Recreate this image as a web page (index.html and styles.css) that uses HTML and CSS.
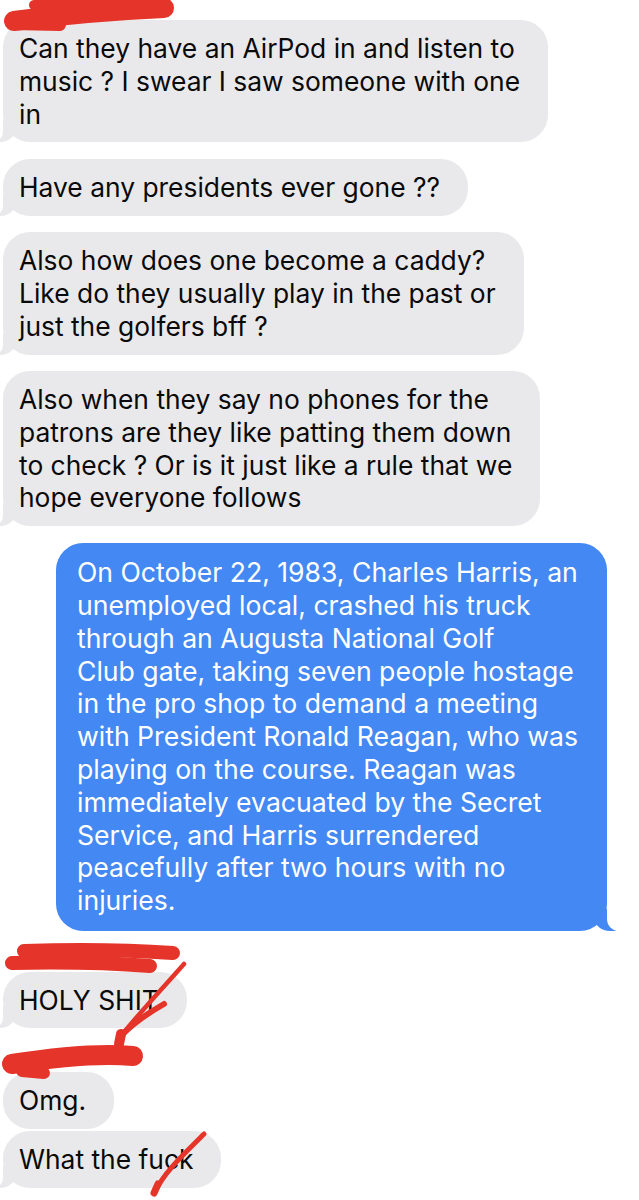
FILE: index.html
```html
<!DOCTYPE html>
<html>
<head>
<title>Messages</title>
<meta http-equiv="Content-Type" content="text/html; charset=UTF-8"/>
<link rel="stylesheet" href="styles.css">
</head>
<body>
<div class="thread">

  <div class="group first">
    <div class="bubble in tail">Can they have an AirPod in and listen to<br>music ? I swear I saw someone with one<br>in</div>
    <div class="bubble in tail">Have any presidents ever gone ??</div>
    <div class="bubble in tail">Also how does one become a caddy?<br>Like do they usually play in the past or<br>just the golfers bff ?</div>
    <div class="bubble in tail">Also when they say no phones for the<br>patrons are they like patting them down<br>to check ? Or is it just like a rule that we<br>hope everyone follows</div>
  </div>

  <div class="group mine">
    <div class="bubble out tail">On October 22, 1983, Charles Harris, an<br>unemployed local, crashed his truck<br>through an Augusta National Golf<br>Club gate, taking seven people hostage<br>in the pro shop to demand a meeting<br>with President Ronald Reagan, who was<br>playing on the course. Reagan was<br>immediately evacuated by the Secret<br>Service, and Harris surrendered<br>peacefully after two hours with no<br>injuries.</div>
  </div>

  <div class="group named">
    <div class="bubble in tail">HOLY SHIT</div>
  </div>

  <div class="group named tight">
    <div class="bubble in">Omg.</div>
    <div class="bubble in tail">What the fuck</div>
  </div>

  <!-- marker scribbles drawn over the screenshot -->
  <svg class="marks" width="639" height="1200" viewBox="0 0 639 1200">
    <g fill="none" stroke="#e5352a" stroke-linecap="round" stroke-linejoin="round">
      <path d="M14 21 C 60 15, 120 10, 164 8" stroke-width="20"/>
      <path d="M34 5 L 150 2" stroke-width="10"/>
      <path d="M12 24 L 60 25" stroke-width="12"/>

      <path d="M24 951 C 80 949, 130 950, 173 953" stroke-width="14"/>
      <path d="M12 963 C 60 962, 110 963, 150 966" stroke-width="14"/>
      <path d="M184 964 C 170 980, 140 1012, 121 1036" stroke-width="4.5"/>
      <path d="M164 1004 C 148 1013, 132 1024, 121 1036" stroke-width="6"/>
      <path d="M121 1034 L 119 1044" stroke-width="10"/>

      <path d="M12 1064 C 50 1058, 100 1053, 133 1056" stroke-width="20"/>
      <path d="M22 1071 L 44 1073" stroke-width="12"/>

      <path d="M204 1134 C 186 1152, 164 1172, 155 1192" stroke-width="5"/>
      <path d="M158 1184 L 154 1193" stroke-width="7"/>
    </g>
  </svg>
</div>
</body>
</html>
```
FILE: styles.css
```css
* {
  margin: 0;
  padding: 0;
}

body {
  background: #fff;
  font-family: Inter, "Liberation Sans", sans-serif;
  font-size: 26.4px;
  line-height: 32.8px;
  color: #0a0a0a;
}

.thread {
  position: relative;
  width: 639px;
  height: 1200px;
  overflow: hidden;
}

.group {
  display: flex;
  flex-direction: column;
  gap: 16.5px;
}

.group.first {
  padding-top: 20px;
}

.group.mine {
  margin-top: 16.5px;
  align-items: flex-end;
  padding-right: 32px;
}

.group.named {
  padding-top: 41px;
}

.group.named.tight {
  padding-top: 44px;
  gap: 2px;
}

.bubble {
  position: relative;
  z-index: 0;
  width: fit-content;
  white-space: nowrap;
  border-radius: 27px;
}

.bubble.in {
  margin-left: 3px;
  padding: 12px 28px 12px 16px;
  background: #e9e9eb;
}

.bubble.out {
  padding: 13.5px 29px 13.5px 21px;
  background: #4388f3;
  color: #fff;
  font-size: 26.6px;
}

/* tails */
.bubble.tail::before,
.bubble.tail::after {
  content: "";
  position: absolute;
  z-index: -1;
  bottom: 0;
  height: 22px;
}

.bubble.in.tail::before {
  left: -7px;
  width: 20px;
  background: #e9e9eb;
  border-bottom-right-radius: 16px 14px;
}

.bubble.in.tail::after {
  left: -10px;
  width: 10px;
  background: #fff;
  border-bottom-right-radius: 10px;
}

.bubble.out.tail::before {
  right: -9px;
  width: 22px;
  background: #4388f3;
  border-bottom-left-radius: 16px 14px;
}

.bubble.out.tail::after {
  right: -12px;
  width: 12px;
  background: #fff;
  border-bottom-left-radius: 12px;
}

.marks {
  position: absolute;
  top: 0;
  left: 0;
  z-index: 2;
  pointer-events: none;
}
```
